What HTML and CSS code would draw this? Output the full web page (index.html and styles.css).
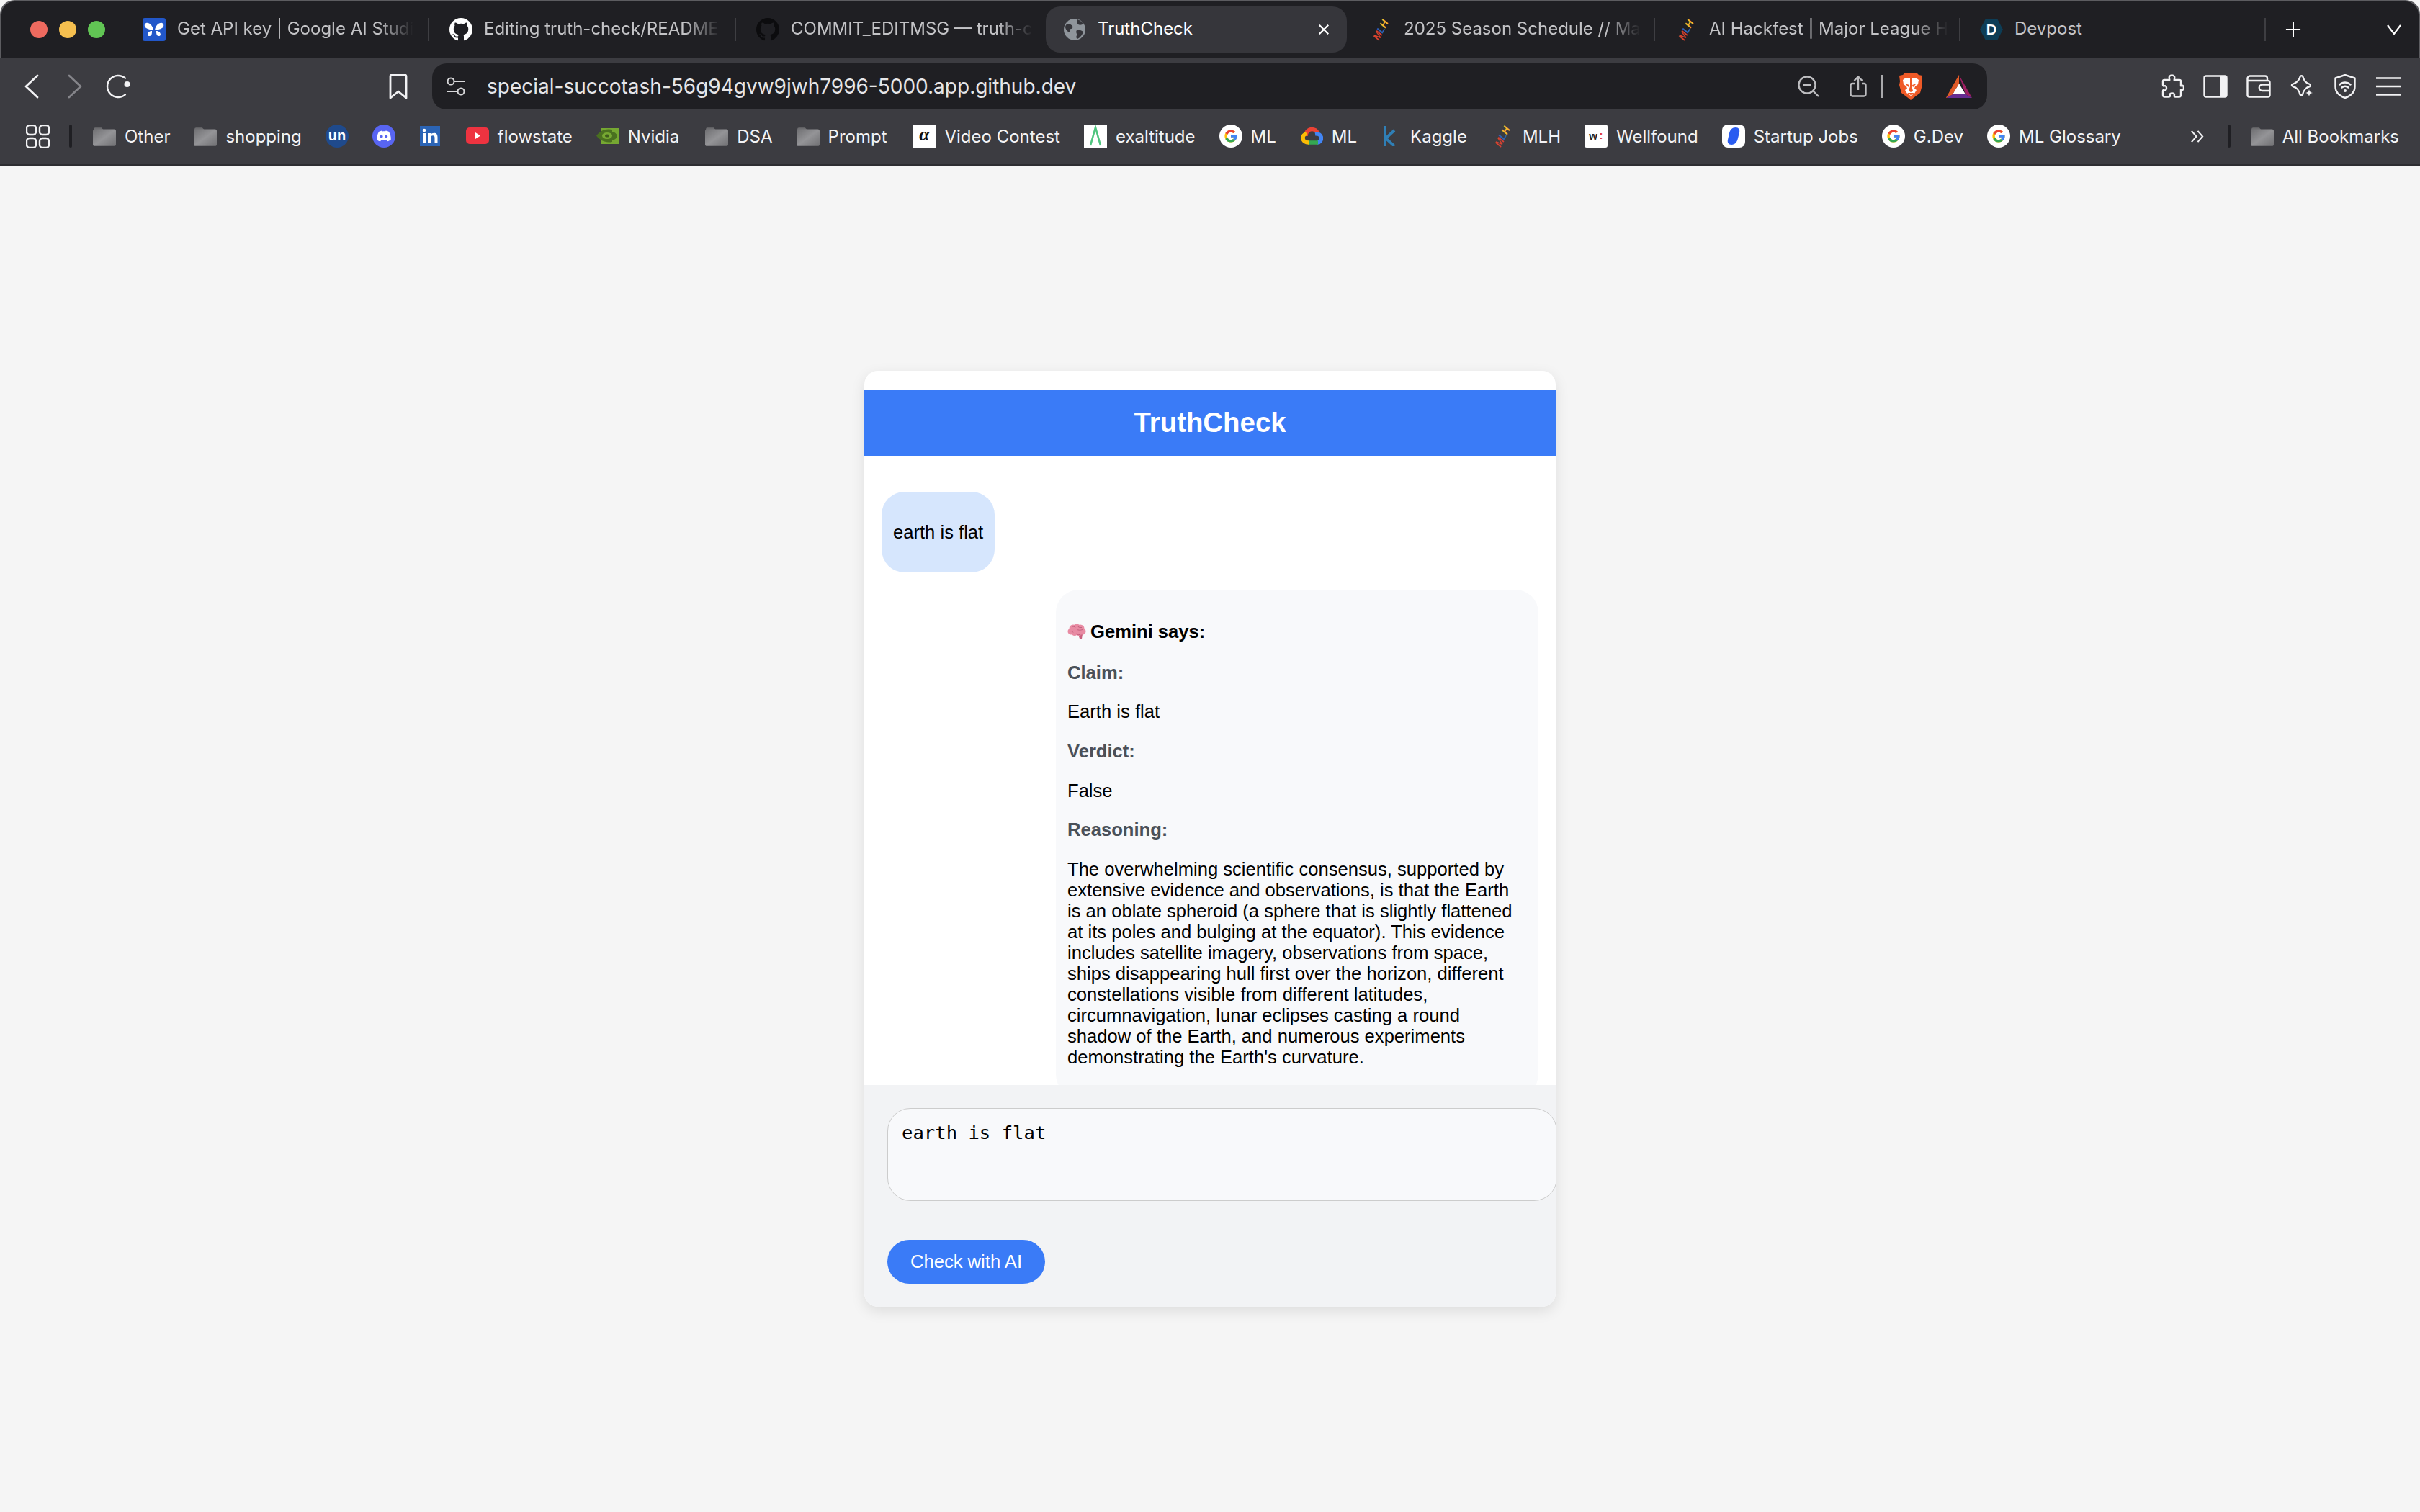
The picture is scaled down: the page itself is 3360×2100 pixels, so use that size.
FILE: index.html
```html
<!DOCTYPE html>
<html lang="en">
<head>
  <meta charset="UTF-8">
  <title>TruthCheck</title>
  <link rel="stylesheet" href="styles.css">
</head>
<body>

  <!-- shared icons -->
  <svg class="sprites" width="0" height="0">
    <symbol id="ic-github" viewBox="0 0 16 16">
      <path fill="currentColor" d="M8 0C3.58 0 0 3.58 0 8c0 3.54 2.29 6.53 5.47 7.59.4.07.55-.17.55-.38 0-.19-.01-.82-.01-1.49-2.01.37-2.53-.49-2.69-.94-.09-.23-.48-.94-.82-1.13-.28-.15-.68-.52-.01-.53.63-.01 1.08.58 1.23.82.72 1.21 1.87.87 2.33.66.07-.52.28-.87.51-1.07-1.78-.2-3.64-.89-3.64-3.95 0-.87.31-1.59.82-2.15-.08-.2-.36-1.02.08-2.12 0 0 .67-.21 2.2.82.64-.18 1.32-.27 2-.27.68 0 1.36.09 2 .27 1.53-1.04 2.2-.82 2.2-.82.44 1.1.16 1.92.08 2.12.51.56.82 1.27.82 2.15 0 3.07-1.87 3.75-3.65 3.95.29.25.54.73.54 1.48 0 1.07-.01 1.93-.01 2.2 0 .21.15.46.55.38A8.013 8.013 0 0016 8c0-4.42-3.58-8-8-8z"/>
    </symbol>
    <symbol id="ic-folder" viewBox="0 0 30 30">
      <defs>
        <linearGradient id="folder-grad" x1="0" y1="0" x2="1" y2="1">
          <stop offset="0" stop-color="#6f6f72"/>
          <stop offset="0.5" stop-color="#949497"/>
          <stop offset="1" stop-color="#707073"/>
        </linearGradient>
      </defs>
      <path fill="#6c6c6f" d="M1 6a2 2 0 0 1 2-2h8l3 3H1z"/>
      <rect x="0" y="6" width="30" height="22" rx="2.5" fill="url(#folder-grad)"/>
    </symbol>
    <symbol id="ic-google" viewBox="0 0 48 48">
      <circle cx="24" cy="24" r="24" fill="#fff"/>
      <g transform="translate(8.5 8.5) scale(.645)">
        <path fill="#FFC107" d="M43.6 20.5H42V20H24v8h11.3c-1.6 4.7-6.1 8-11.3 8-6.6 0-12-5.4-12-12s5.4-12 12-12c3.1 0 5.8 1.2 8 3l5.7-5.7C34 6.1 29.3 4 24 4 13 4 4 13 4 24s9 20 20 20 20-9 20-20c0-1.2-.1-2.3-.4-3.5z"/>
        <path fill="#EA4335" d="M6.3 14.7l6.6 4.8C14.7 15.1 19 12 24 12c3.1 0 5.8 1.2 8 3l5.7-5.7C34 6.1 29.3 4 24 4 16.3 4 9.7 8.3 6.3 14.7z"/>
        <path fill="#34A853" d="M24 44c5.2 0 9.9-2 13.4-5.2l-6.2-5.2C29.2 35.1 26.7 36 24 36c-5.2 0-9.6-3.3-11.3-7.9l-6.5 5C9.5 39.6 16.2 44 24 44z"/>
        <path fill="#4285F4" d="M43.6 20.5H42V20H24v8h11.3c-.8 2.2-2.2 4.2-4.1 5.6l6.2 5.2C37 39.2 44 34 44 24c0-1.2-.1-2.3-.4-3.5z"/>
      </g>
    </symbol>
  </svg>

  <div class="tabbar">
    <div class="traffic">
      <span class="dot dot-red"></span>
      <span class="dot dot-yellow"></span>
      <span class="dot dot-green"></span>
    </div>
    <div class="tabs">
      <div class="tab">
        <svg class="favicon" viewBox="0 0 32 32">
          <rect width="32" height="32" rx="3" fill="#2257c9"/>
          <path fill="#fff" d="M15 17C14 10 9 6 5 7 2 8 2 12 5 14c3 2 7 2 10 3zM17 17c1-7 6-11 10-10 3 1 3 5 0 7-3 2-7 2-10 3zM13 18c-3 0-6 2-6 5 0 2 3 3 5 1 1-2 1-4 1-6zM19 18c3 0 6 2 6 5 0 2-3 3-5 1-1-2-1-4-1-6z"/>
        </svg>
        <span class="tab-title">Get API key | Google AI Studi</span>
      </div>
      <div class="tab">
        <svg class="favicon fav-white"><use href="#ic-github"/></svg>
        <span class="tab-title">Editing truth-check/README</span>
      </div>
      <div class="tab tab-before-active">
        <svg class="favicon fav-black"><use href="#ic-github"/></svg>
        <span class="tab-title">COMMIT_EDITMSG — truth-c</span>
      </div>
      <div class="tab tab-active">
        <svg class="favicon" viewBox="0 0 32 32">
          <circle cx="16" cy="16" r="15" fill="#8f959b"/>
          <path fill="#35353a" d="M6 8c3 0 5 1 7 3 1 2 0 4-2 4s-2 3-1 5c-3 0-6-3-7-7 0-2 1-4 3-5zM20 2c3 1 6 3 8 6-2 2-5 2-7 1-2-2-2-4-1-7zM19 17c3-1 6 0 9 2-1 4-4 8-8 10-2-1-2-3-1-5s-2-4 0-7z"/>
        </svg>
        <span class="tab-title">TruthCheck</span>
        <svg class="tab-close" viewBox="0 0 18 18"><path d="M2 2l14 14M16 2L2 16"/></svg>
      </div>
      <div class="tab">
        <svg class="favicon" viewBox="0 0 32 32">
          <g transform="rotate(-62 16 16)" font-family="Liberation Sans" font-weight="700" font-style="italic" font-size="14">
            <text x="0.500" y="21" fill="#d8432f">M</text>
            <text x="12" y="21" fill="#2f62b5">L</text>
            <text x="20" y="21" fill="#f2b62e">H</text>
          </g>
        </svg>
        <span class="tab-title">2025 Season Schedule // Ma</span>
      </div>
      <div class="tab">
        <svg class="favicon" viewBox="0 0 32 32">
          <g transform="rotate(-62 16 16)" font-family="Liberation Sans" font-weight="700" font-style="italic" font-size="14">
            <text x="0.500" y="21" fill="#d8432f">M</text>
            <text x="12" y="21" fill="#2f62b5">L</text>
            <text x="20" y="21" fill="#f2b62e">H</text>
          </g>
        </svg>
        <span class="tab-title">AI Hackfest | Major League H</span>
      </div>
      <div class="tab">
        <svg class="favicon" viewBox="0 0 32 32">
          <path fill="#0d3d56" d="M8 1h16l8 15-8 15H8L0 16z"/>
          <text x="16" y="23" text-anchor="middle" font-family="Liberation Sans" font-weight="700" font-size="20" fill="#fff">D</text>
        </svg>
        <span class="tab-title tab-title-full">Devpost</span>
      </div>
    </div>
    <svg class="new-tab" viewBox="0 0 24 24"><path d="M12 1v22M1 12h22"/></svg>
    <svg class="tab-menu" viewBox="0 0 20 14"><path d="M1 1l9 12 9-12"/></svg>
  </div>

  <div class="toolbar">
    <div class="nav-btns">
      <svg class="tool-icon" viewBox="0 0 34 34"><path d="M25 2L9 17l16 15"/></svg>
      <svg class="tool-icon dim" viewBox="0 0 34 34"><path d="M9 2l16 15L9 32"/></svg>
      <svg class="tool-icon thin" viewBox="0 0 34 34">
        <path d="M26.900 5.700A15 15 0 1 0 26.900 28.300"/>
        <circle class="solid" cx="29.500" cy="14" r="4"/>
      </svg>
    </div>
    <svg class="tool-icon bookmark" viewBox="0 0 34 34"><path d="M6 3a2 2 0 0 1 2-2h18a2 2 0 0 1 2 2v30L17 24 6 33z"/></svg>

    <div class="urlbar">
      <svg class="site-icon" viewBox="0 0 26 26">
        <circle cx="6" cy="6" r="4.5"/><path d="M11 6h14M1 20h14"/><circle cx="20" cy="20" r="4.5"/>
      </svg>
      <span class="url-text">special-succotash-56g94gvw9jwh7996-5000.app.github.dev</span>
      <div class="url-actions">
        <svg class="zoom-icon" viewBox="0 0 30 30">
          <circle cx="13" cy="13" r="11.5"/><path d="M8 13h10M21 21l8 8"/>
        </svg>
        <svg class="share-icon" viewBox="0 0 24 30">
          <path d="M7 11H4a2.5 2.5 0 0 0-2.5 2.500V26A2.500 2.500 0 0 0 4 28.500h16a2.500 2.500 0 0 0 2.500-2.500V13.500A2.500 2.500 0 0 0 20 11h-3M12 20V2M6.500 7L12 1.500 17.500 7"/>
        </svg>
        <span class="url-sep"></span>
        <svg class="brave-icon" viewBox="0 0 32 38">
          <path fill="#ef5a27" d="M8 0h16l3 3 5 1-1 8 1 5-3 11-8 6-5 4-5-4-8-6L0 17l1-5-1-8 5-1z"/>
          <path fill="#fff" d="M9 7h14l4 3-1 6-4 3-1 3 3 2-3 5-5 3-5-3-3-5 3-2-1-3-4-3-1-6z"/>
          <path fill="#ef5a27" d="M8 15l6 2-1 3zM24 15l-6 2 1 3zM15 8h2v11l2 6-3 2-3-2 2-6zM11 28h10l-5 3z"/>
        </svg>
        <svg class="bat-icon" viewBox="0 0 36 32">
          <path fill="#9e1f63" d="M18 0l18 32-9-5z"/>
          <path fill="#ff5000" d="M18 0L0 32l9-5z"/>
          <path fill="#fff" d="M18 12l9 15H9z"/>
          <path fill="#662d91" d="M0 32l9-5h18l9 5z"/>
          <path fill="#e05a28" d="M18 0v12L9 27l-9 5z"/>
        </svg>
      </div>
    </div>

    <div class="tool-right">
      <svg class="tool-icon thin" viewBox="0 0 34 34">
        <path d="M13 6.500C12 3 14 1.500 16.500 1.500S21 3 20 6.500l-.3 1.500H27a2 2 0 0 1 2 2v6.300l1.500-.4c3-.8 3.500 6.500 0 6.100L29 21.500V29a2.500 2.500 0 0 1-2.500 2.500H21c-1.500 0-1.500-1-1.200-2 .7-2-1-3-3-3s-3.700 1-3 3c.3 1 .3 2-1.200 2H6.500A2.500 2.500 0 0 1 4 29v-5.500c0-1.500 1-1.500 2-1.200 2 .7 3-1 3-3s-1-3.700-3-3c-1 .3-2 .3-2-1.200V10a2 2 0 0 1 2-2h7.300z"/>
      </svg>
      <svg class="tool-icon thin" viewBox="0 0 34 34">
        <rect x="1.500" y="2.500" width="31" height="29" rx="2.500"/>
        <path class="solid" d="M23 2h7a3 3 0 0 1 3 3v24a3 3 0 0 1-3 3h-7z"/>
      </svg>
      <svg class="tool-icon thin" viewBox="0 0 34 34">
        <path d="M29 9V5.500A3 3 0 0 0 26 2.500H5A3.500 3.500 0 0 0 1.500 6v23A2.500 2.500 0 0 0 4 31.500h26a2.500 2.500 0 0 0 2.500-2.500V11.500A2.500 2.500 0 0 0 30 9H1.500"/>
        <path d="M32 14.500H22a4 4 0 0 0 0 8.500h10"/>
      </svg>
      <svg class="tool-icon thin" viewBox="0 0 34 34">
        <path d="M15 1.500c1-.4 2-.4 3 0 2 7 4 9 10 11.500 1 .5 1 2 0 3-6 2-8.500 5-10 11.500-1 1-2.500 1-3.500 0-1.500-6.500-4-9.500-10-11.500-2-1-2-2.500-.5-3C10 10.500 13 8.500 15 1.500z" transform="translate(0 1)"/>
        <path class="solid" d="M27 21c.6 3 2 4.400 5 5-3 .6-4.400 2-5 5-.6-3-2-4.400-5-5 3-.6 4.400-2 5-5z"/>
      </svg>
      <svg class="tool-icon thin" viewBox="0 0 34 34">
        <path d="M17 1l13.500 4.500v12c0 7-5 12.500-13.500 15.500C8.500 30 3.500 24.500 3.500 17.500v-12zM9.500 14.500c4.500-4 10.500-4 15 0M12.500 18.500c3-2.400 6-2.400 9 0"/>
        <circle class="solid" cx="17" cy="23" r="2"/>
      </svg>
      <svg class="tool-icon thin" viewBox="0 0 34 34"><path d="M0 5.500h34M0 17h34M0 28.500h34"/></svg>
    </div>
  </div>

  <div class="bookmarks">
    <svg class="apps-icon" viewBox="0 0 33 33">
      <rect x="1" y="1" width="13" height="13" rx="4"/><rect x="19" y="1" width="13" height="13" rx="4"/>
      <rect x="1" y="19" width="13" height="13" rx="4"/><rect x="19" y="19" width="13" height="13" rx="4"/>
    </svg>
    <span class="bm-sep bm-sep-start"></span>

    <div class="bm bm-folder"><svg class="bm-icon"><use href="#ic-folder"/></svg>Other</div>
    <div class="bm bm-folder"><svg class="bm-icon"><use href="#ic-folder"/></svg>shopping</div>
    <div class="bm">
      <svg class="bm-icon" viewBox="0 0 32 32">
        <circle cx="16" cy="16" r="16" fill="#1f4a8c"/>
        <text x="16" y="22" text-anchor="middle" font-family="Liberation Sans" font-weight="700" font-size="20" fill="#fff">un</text>
      </svg>
    </div>
    <div class="bm">
      <svg class="bm-icon" viewBox="0 0 32 32">
        <circle cx="16" cy="16" r="16" fill="#5865f2"/>
        <path fill="#fff" d="M9 10c2-1 4-1.500 4.500-1.500l.5 1c1.300-.2 2.700-.2 4 0l.5-1c.5 0 2.500.5 4.500 1.500 2 3.500 3 7 2.700 11-1.800 1.300-3.500 2-4.700 2.300l-1.200-2c-2.400.6-5 .6-7.400 0l-1.200 2C9 23 7.300 22.300 6.300 21 6 17 7 13.500 9 10z"/>
        <ellipse cx="12.700" cy="16.500" rx="1.900" ry="2.200" fill="#5865f2"/>
        <ellipse cx="19.300" cy="16.500" rx="1.900" ry="2.200" fill="#5865f2"/>
      </svg>
    </div>
    <div class="bm">
      <svg class="bm-icon" viewBox="0 0 32 32">
        <rect x="1" y="2" width="28" height="28" fill="#2b64b5"/>
        <rect x="5" y="12" width="4" height="13" fill="#fff"/>
        <circle cx="7" cy="8" r="2.300" fill="#fff"/>
        <path fill="#fff" d="M12 12h4v2c1-1.500 2.500-2.300 4.500-2.300 3.500 0 5 2 5 5.800V25h-4v-6.500c0-2-.7-3.200-2.500-3.200S16 16.500 16 18.500V25h-4z"/>
      </svg>
    </div>
    <div class="bm">
      <svg class="bm-icon" viewBox="0 0 32 32">
        <rect y="4" width="32" height="23" rx="5" fill="#ee3340"/>
        <path fill="#fff" d="M13 11l7 4.500-7 4.500z"/>
      </svg>
      flowstate
    </div>
    <div class="bm">
      <svg class="bm-icon" viewBox="0 0 32 32">
        <rect x="6" y="5" width="26" height="22" fill="#76a832"/>
        <path fill="#4a7020" d="M0 15.500C5 8 14 5 22 7v3c5 1 7 4 7 6s-3 5-7 6v2C13 26 5 22 0 15.500z"/>
        <ellipse cx="15" cy="15.500" rx="7" ry="4.500" fill="#76a832"/>
        <ellipse cx="15" cy="15.500" rx="3" ry="2" fill="#3e5c1c"/>
      </svg>
      Nvidia
    </div>
    <div class="bm bm-folder bm-wide"><svg class="bm-icon"><use href="#ic-folder"/></svg>DSA</div>
    <div class="bm bm-folder"><svg class="bm-icon"><use href="#ic-folder"/></svg>Prompt</div>
    <div class="bm bm-wide">
      <svg class="bm-icon" viewBox="0 0 32 32">
        <rect width="32" height="32" fill="#fff"/>
        <text x="15.500" y="22" text-anchor="middle" font-family="Liberation Serif" font-style="italic" font-weight="700" font-size="26" fill="#111">α</text>
      </svg>
      Video Contest
    </div>
    <div class="bm">
      <svg class="bm-icon" viewBox="0 0 32 32">
        <rect width="32" height="32" fill="#fff"/>
        <path d="M9 29l7-25 7 25" fill="none" stroke="#4fc57f" stroke-width="2.600"/>
      </svg>
      exaltitude
    </div>
    <div class="bm"><svg class="bm-icon"><use href="#ic-google"/></svg>ML</div>
    <div class="bm">
      <svg class="bm-icon" viewBox="0 0 32 32" fill="none" stroke-width="5.500">
        <path stroke="#ea4335" d="M8 16C8 10 12 6.500 16.500 6.500c3.500 0 6 1.500 8 5"/>
        <path stroke="#4285f4" d="M21 13c5-1 8.500 2 8.500 6 0 3.500-2.500 6-5.500 6"/>
        <path stroke="#34a853" d="M25 25H11"/>
        <path stroke="#fbbc05" d="M12 25c-4 0-8-2-8-6.500 0-3 2-5 5-6"/>
      </svg>
      ML
    </div>
    <div class="bm bm-wide">
      <svg class="bm-icon bm-kaggle" viewBox="0 0 18 28">
        <path fill="none" stroke="#2f7fb6" stroke-width="3.800" d="M3 0v28M16 6L4 17l12 11"/>
      </svg>
      Kaggle
    </div>
    <div class="bm">
      <svg class="bm-icon" viewBox="0 0 32 32">
        <g transform="rotate(-62 16 16)" font-family="Liberation Sans" font-weight="700" font-style="italic" font-size="14">
          <text x="0.500" y="21" fill="#d8432f">M</text>
          <text x="12" y="21" fill="#2f62b5">L</text>
          <text x="20" y="21" fill="#f2b62e">H</text>
        </g>
      </svg>
      MLH
    </div>
    <div class="bm">
      <svg class="bm-icon" viewBox="0 0 32 32">
        <rect width="32" height="32" rx="3" fill="#fff"/>
        <text x="12" y="21" text-anchor="middle" font-family="Liberation Sans" font-weight="700" font-size="15" fill="#222">w</text>
        <text x="23" y="20" text-anchor="middle" font-family="Liberation Sans" font-weight="700" font-size="15" fill="#e03a3a">:</text>
      </svg>
      Wellfound
    </div>
    <div class="bm">
      <svg class="bm-icon" viewBox="0 0 32 32">
        <rect width="32" height="32" rx="8" fill="#fff"/>
        <path fill="#2a5cf0" d="M19 4c4 0 6 3 5 7l-2 8c-1 5-4 9-9 9-4 0-6-3-5-7l2-9c1-5 4-8 9-8z"/>
      </svg>
      Startup Jobs
    </div>
    <div class="bm"><svg class="bm-icon"><use href="#ic-google"/></svg>G.Dev</div>
    <div class="bm"><svg class="bm-icon"><use href="#ic-google"/></svg>ML Glossary</div>

    <svg class="bm-more" viewBox="0 0 20 20"><path d="M2 2l7 8-7 8M11 2l7 8-7 8"/></svg>
    <span class="bm-sep bm-sep-end"></span>
    <div class="bm bm-folder"><svg class="bm-icon"><use href="#ic-folder"/></svg>All Bookmarks</div>
  </div>

  <main class="page">
    <div class="chat-card">
      <div class="chat-header">TruthCheck</div>

      <div class="chat-box">
        <div class="bubble bubble-user"><p>earth is flat</p></div>
        <div class="bubble bubble-ai">
          <p class="gemini">
            <svg class="brain" viewBox="0 0 26 22">
              <path fill="#c9607e" d="M15 15h6l-1 6c-1 1-3 1-3 0z"/>
              <g fill="#e88ba3">
                <circle cx="8" cy="7" r="5.500"/><circle cx="13" cy="6" r="5.500"/><circle cx="18" cy="7" r="5.500"/>
                <circle cx="5" cy="11" r="4.500"/><circle cx="21" cy="11" r="4.500"/>
                <circle cx="10" cy="13" r="4"/><circle cx="16" cy="13" r="4"/>
              </g>
              <path fill="none" stroke="#bd5a78" stroke-width=".9" d="M6 5c2-1.500 4-1 5 .5M14 3c1 2 3 3 6 2.500M3 11c2-1 4-.5 5 1.500M13 8c2 1.500 5 1.500 8 .5M12 14c2 2 5 2 7 .5"/>
            </svg>
            <strong>Gemini says:</strong>
          </p>
          <p class="label">Claim:</p>
          <p>Earth is flat</p>
          <p class="label">Verdict:</p>
          <p>False</p>
          <p class="label">Reasoning:</p>
          <p>The overwhelming scientific consensus, supported by extensive evidence and observations, is that the Earth is an oblate spheroid (a sphere that is slightly flattened at its poles and bulging at the equator). This evidence includes satellite imagery, observations from space, ships disappearing hull first over the horizon, different constellations visible from different latitudes, circumnavigation, lunar eclipses casting a round shadow of the Earth, and numerous experiments demonstrating the Earth's curvature.</p>
        </div>
      </div>

      <div class="input-area">
        <textarea class="claim-input">earth is flat</textarea>
        <button class="check-btn">Check with AI</button>
      </div>
    </div>
  </main>

</body>
</html>
```

FILE: styles.css
```css
* {
  margin: 0;
  padding: 0;
  box-sizing: border-box;
}

html {
  background: #f5f5f5;
}

body {
  font-family: 'Liberation Sans', Arial, sans-serif;
  background: #f5f5f5;
  height: 100vh;
  display: flex;
  flex-direction: column;
  overflow: hidden;
}

.sprites {
  display: block;
  height: 0;
}

/* tab strip */
.tabbar {
  display: flex;
  align-items: center;
  flex: none;
  height: 80px;
  padding-left: 40px;
  background: #1f1f23;
  border: 2px solid #5c5c60;
  border-bottom: none;
  border-radius: 20px 20px 0 0;
  font-family: Inter, sans-serif;
}

.traffic {
  display: flex;
  gap: 16px;
  width: 128px;
  flex: none;
}

.dot {
  width: 24px;
  height: 24px;
  border-radius: 50%;
}

.dot-red { background: #ee6a5f; }
.dot-yellow { background: #f5bf4f; }
.dot-green { background: #61c554; }

.tabs {
  display: flex;
  align-items: center;
  flex: none;
}

.tab {
  display: flex;
  align-items: center;
  gap: 16px;
  width: 426px;
  height: 32px;
  padding: 0 20px 0 28px;
  border-right: 2px solid #3e3e42;
  font-size: 24px;
  color: #c3c3c6;
}

.tab-before-active {
  border-right-color: transparent;
}

.tab-active {
  width: 418px;
  height: 64px;
  margin: 0 4px;
  padding: 0 24px;
  background: #36363b;
  border: none;
  border-radius: 20px;
  color: #fff;
}

.tab-active ~ .tab {
  width: 424px;
  padding-left: 27px;
}

.tab-title {
  flex: 1;
  padding-bottom: 3px;
  white-space: nowrap;
  -webkit-mask-image: linear-gradient(90deg, #000 85%, transparent);
  mask-image: linear-gradient(90deg, #000 85%, transparent);
}

.tab-active .tab-title,
.tab-title-full {
  -webkit-mask-image: none;
  mask-image: none;
}

.favicon {
  flex: none;
  width: 32px;
  height: 32px;
}

.fav-white { color: #fff; }
.fav-black { color: #0c0c0e; }

.tab-close {
  flex: none;
  width: 16px;
  height: 16px;
  fill: none;
  stroke: #fff;
  stroke-width: 2.6;
}

.new-tab {
  flex: none;
  width: 22px;
  height: 22px;
  margin-left: 27px;
  fill: none;
  stroke: #fff;
  stroke-width: 2.2;
}

.tab-menu {
  flex: none;
  width: 20px;
  height: 14px;
  margin-left: 119px;
  fill: none;
  stroke: #fff;
  stroke-width: 2.2;
}

/* address row */
.toolbar {
  display: flex;
  align-items: center;
  flex: none;
  height: 72px;
  padding: 8px 27px 0;
  background: #3c3c41;
}

.tool-icon {
  flex: none;
  width: 34px;
  height: 34px;
  fill: none;
  stroke: #f2f2f4;
  stroke-width: 2.8;
  stroke-linecap: round;
  stroke-linejoin: round;
}

.tool-icon.thin {
  stroke-width: 2.4;
}

.tool-icon.dim {
  stroke: #85858a;
}

.tool-icon .solid {
  fill: #f2f2f4;
  stroke: none;
}

.nav-btns {
  display: flex;
  gap: 26px;
}

.bookmark {
  margin: 0 30px 0 355px;
}

.urlbar {
  display: flex;
  align-items: center;
  flex: none;
  width: 2159px;
  height: 64px;
  padding: 0 21px 0 20px;
  background: #1f1f23;
  border-radius: 20px;
}

.site-icon {
  flex: none;
  width: 26px;
  height: 26px;
  margin-right: 30px;
  fill: none;
  stroke: #d8d8da;
  stroke-width: 2;
}

.url-text {
  flex: 1;
  font-family: Inter, sans-serif;
  font-size: 28px;
  color: #e6e6e8;
  white-space: nowrap;
}

.url-actions {
  display: flex;
  align-items: center;
}

.zoom-icon,
.share-icon {
  flex: none;
  fill: none;
  stroke: #bdbdc0;
  stroke-width: 2.4;
}

.zoom-icon {
  width: 30px;
  height: 30px;
}

.share-icon {
  width: 24px;
  height: 30px;
  margin-left: 42px;
}

.url-sep {
  width: 2px;
  height: 32px;
  margin: 0 23px 0 20px;
  background: #a9a9ac;
}

.brave-icon {
  flex: none;
  width: 32px;
  height: 38px;
}

.bat-icon {
  flex: none;
  width: 36px;
  height: 32px;
  margin-left: 33px;
}

.tool-right {
  display: flex;
  gap: 26px;
  margin-left: 240px;
}

/* bookmarks row */
.bookmarks {
  display: flex;
  align-items: center;
  gap: 33px;
  flex: none;
  height: 78px;
  padding: 0 29px 2px 36px;
  background: #3c3c41;
  border-bottom: 2px solid #2d2d31;
  font-family: Inter, sans-serif;
  font-size: 24px;
  color: #f3f3f5;
}

.apps-icon {
  flex: none;
  width: 33px;
  height: 33px;
  margin-right: -6px;
  fill: none;
  stroke: #f2f2f4;
  stroke-width: 2.4;
}

.bm-sep {
  flex: none;
  width: 4px;
  height: 32px;
  border-radius: 2px;
  background: #1f1f23;
}

.bm-sep-start {
  margin-right: -4px;
}

.bm-sep-end {
  margin-right: -5px;
}

.bm {
  display: flex;
  align-items: center;
  gap: 12px;
  flex: none;
  white-space: nowrap;
}

.bm-wide {
  margin-left: 3px;
}

.bm-icon {
  flex: none;
  width: 32px;
  height: 32px;
}

.bm-kaggle {
  width: 18px;
  height: 28px;
  margin-right: 8px;
}

.bm-more {
  flex: none;
  width: 19px;
  height: 19px;
  margin-left: auto;
  fill: none;
  stroke: #f2f2f4;
  stroke-width: 2.2;
}

/* the page itself */
.page {
  flex: 1;
  display: flex;
  justify-content: center;
  align-items: center;
}

.chat-card {
  display: flex;
  flex-direction: column;
  width: 960px;
  height: 1300px;
  padding-top: 26px;
  overflow: hidden;
  background: #fff;
  border-radius: 19px;
  box-shadow: 0 6px 19px rgba(0, 0, 0, 0.1);
}

.chat-header {
  flex: none;
  height: 92px;
  line-height: 92px;
  text-align: center;
  font-size: 38.4px;
  font-weight: 700;
  color: #fff;
  background: #3a7bf7;
}

.chat-box {
  flex: 1;
  min-height: 0;
  display: flex;
  flex-direction: column;
  gap: 24px;
  padding: 50px 24px 0;
  overflow: hidden;
}

.bubble {
  flex: none;
  padding: 16px;
  border-radius: 32px;
  font-size: 25.6px;
  line-height: 29px;
  color: #000;
}

.bubble p {
  margin: 25.6px 0;
}

.bubble-user {
  align-self: flex-start;
  background: #d6e6fd;
}

.bubble-ai {
  align-self: flex-end;
  width: 670px;
  background: #f8f9fb;
}

.bubble .gemini {
  display: flex;
  align-items: center;
  gap: 6px;
  height: 32px;
  margin: 26px 0 26.6px;
}

.brain {
  flex: none;
  width: 26px;
  height: 22px;
}

.label {
  font-weight: 700;
  color: #4b5159;
}

.input-area {
  flex: none;
  height: 308px;
  padding: 32px 0 32px 32px;
  background: #f2f3f5;
}

.claim-input {
  display: block;
  width: 930px;
  height: 129px;
  padding: 18px 19px;
  resize: none;
  border: 1.6px solid #ccc;
  border-radius: 32px;
  background: #f8f9fb;
  font-family: 'DejaVu Sans Mono', monospace;
  font-size: 25.6px;
  color: #000;
}

.check-btn {
  display: block;
  width: 219px;
  height: 61px;
  margin-top: 54px;
  border: none;
  border-radius: 32px;
  background: #3a7bf7;
  color: #fff;
  font-family: 'Liberation Sans', Arial, sans-serif;
  font-size: 25.6px;
}
```
